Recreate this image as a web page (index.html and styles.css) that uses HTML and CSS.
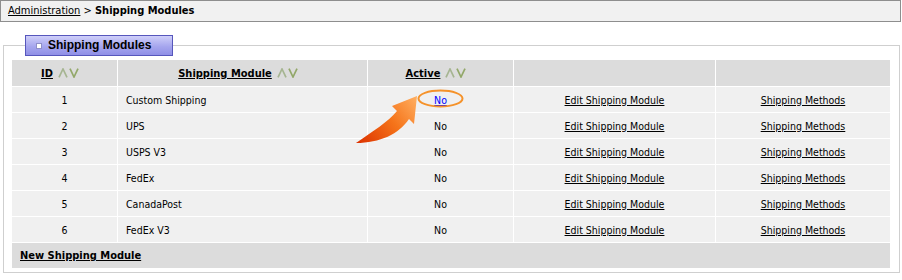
FILE: index.html
```html
<!DOCTYPE html>
<html>
<head>
<meta charset="utf-8">
<link rel="stylesheet" href="styles.css">
</head>
<body>
<div class="crumb"><a href="#">Administration</a> &gt; <b>Shipping Modules</b></div>
<fieldset class="box">
  <legend class="tab"><span class="sq"></span>Shipping Modules</legend>
  <table class="grid">
    <thead>
      <tr>
        <th class="c1"><a href="#">ID</a><span class="sort"><svg width="10" height="10" viewBox="0 0 10 10"><polyline class="up" points="1,9.3 5,1 9,9.3"/></svg><svg width="10" height="10" viewBox="0 0 10 10"><polyline class="dn" points="1,0.7 5,9 9,0.7"/></svg></span></th>
        <th class="c2"><a href="#">Shipping Module</a><span class="sort"><svg width="10" height="10" viewBox="0 0 10 10"><polyline class="up" points="1,9.3 5,1 9,9.3"/></svg><svg width="10" height="10" viewBox="0 0 10 10"><polyline class="dn" points="1,0.7 5,9 9,0.7"/></svg></span></th>
        <th class="c3"><a href="#">Active</a><span class="sort"><svg width="10" height="10" viewBox="0 0 10 10"><polyline class="up" points="1,9.3 5,1 9,9.3"/></svg><svg width="10" height="10" viewBox="0 0 10 10"><polyline class="dn" points="1,0.7 5,9 9,0.7"/></svg></span></th>
        <th class="c4"></th>
        <th class="c5"></th>
      </tr>
    </thead>
    <tbody>
      <tr><td>1</td><td class="name">Custom Shipping</td><td><a href="#" class="blue">No</a></td><td><a href="#">Edit Shipping Module</a></td><td><a href="#">Shipping Methods</a></td></tr>
      <tr><td>2</td><td class="name">UPS</td><td>No</td><td><a href="#">Edit Shipping Module</a></td><td><a href="#">Shipping Methods</a></td></tr>
      <tr><td>3</td><td class="name">USPS V3</td><td>No</td><td><a href="#">Edit Shipping Module</a></td><td><a href="#">Shipping Methods</a></td></tr>
      <tr><td>4</td><td class="name">FedEx</td><td>No</td><td><a href="#">Edit Shipping Module</a></td><td><a href="#">Shipping Methods</a></td></tr>
      <tr><td>5</td><td class="name">CanadaPost</td><td>No</td><td><a href="#">Edit Shipping Module</a></td><td><a href="#">Shipping Methods</a></td></tr>
      <tr><td>6</td><td class="name">FedEx V3</td><td>No</td><td><a href="#">Edit Shipping Module</a></td><td><a href="#">Shipping Methods</a></td></tr>
    </tbody>
    <tfoot>
      <tr><td colspan="5" class="foot"><a href="#">New Shipping Module</a></td></tr>
    </tfoot>
  </table>
</fieldset>
<svg class="callout" width="902" height="280" viewBox="0 0 902 280">
  <defs>
    <linearGradient id="ag" x1="358" y1="143" x2="416" y2="97" gradientUnits="userSpaceOnUse">
      <stop offset="0" stop-color="#dd3300"/>
      <stop offset="0.55" stop-color="#f5741a"/>
      <stop offset="1" stop-color="#ffae60"/>
    </linearGradient>
  </defs>
  <path d="M356,143 C373,131 388,122 397,111 L392,106 L417,96 L414,124 L409,119 C399,134 380,143 356,143 Z" fill="url(#ag)"/>
  <ellipse cx="440.5" cy="98.5" rx="22" ry="8" fill="none" stroke="#f5922a" stroke-width="2"/>
</svg>
</body>
</html>
```

FILE: styles.css
```css
html, body {
  margin: 0;
  padding: 0;
  background: #ffffff;
}
body {
  position: relative;
  width: 902px;
  height: 280px;
  overflow: hidden;
  font-family: "DejaVu Sans Condensed", "DejaVu Sans", sans-serif;
  font-stretch: condensed;
  font-size: 10.5px;
  color: #000;
}
a {
  color: #000;
  text-decoration: underline;
}
.crumb {
  box-sizing: border-box;
  width: 901px;
  height: 22px;
  line-height: 20px;
  border: 1px solid #8e8e8e;
  background: #f1f1f1;
  padding-left: 7px;
  font-size: 11px;
}
.crumb b {
  font-weight: bold;
}
.box {
  box-sizing: border-box;
  width: 897px;
  margin: 13px 0 0 3px;
  padding: 4px 9px 4px 8px;
  border: 1px solid #cfcfcf;
  min-inline-size: 0;
}
.tab {
  margin-left: 13px;
  padding: 0 21px 0 10px;
  height: 21px;
  box-sizing: border-box;
  line-height: 19px;
  border: 1px solid #5656bc;
  background: linear-gradient(#cfcff9, #a6a6ee 55%, #8f8fe6);
  font-family: "Liberation Sans", Arial, sans-serif;
  font-stretch: normal;
  font-weight: bold;
  font-size: 12px;
  color: #000;
  display: flex;
  align-items: center;
}
.sq {
  display: inline-block;
  width: 4px;
  height: 4px;
  border: 1px solid #8e8ec8;
  background: #ffffff;
  margin-right: 6px;
}
.grid {
  width: 878px;
  table-layout: fixed;
  border-collapse: separate;
  border-spacing: 0;
}
.grid th, .grid td {
  box-sizing: border-box;
  padding: 0;
  text-align: center;
  vertical-align: middle;
  border-left: 1px solid #fff;
  border-top: 1px solid #fff;
}
.grid th:first-child, .grid td:first-child {
  border-left: none;
}
.grid th {
  border-top: none;
  height: 26px;
  background: #dcdcdc;
  font-weight: bold;
  font-size: 11px;
}
.grid th a {
  font-weight: bold;
}
.c1 { width: 105px; }
.c2 { width: 250px; }
.c3 { width: 146px; }
.c4 { width: 202px; }
.c5 { width: 175px; }
.grid tbody td {
  height: 26px;
  background: #f0f0f0;
}
.grid td.name {
  text-align: left;
  padding-left: 8px;
}
.sort {
  display: inline-flex;
  gap: 1px;
  margin-left: 5px;
  margin-right: 9px;
  vertical-align: -1px;
}
.sort svg polyline {
  fill: none;
  stroke-width: 1.7;
  stroke-linejoin: miter;
}
.sort .up { stroke: #a6b592; }
.sort .dn { stroke: #93a86a; }
a.blue {
  color: #0000ff;
}
.grid td.foot {
  height: 26px;
  background: #dcdcdc;
  text-align: left;
  padding-left: 8px;
  font-weight: bold;
  font-size: 11px;
}
.callout {
  position: absolute;
  left: 0;
  top: 0;
  pointer-events: none;
}
```
